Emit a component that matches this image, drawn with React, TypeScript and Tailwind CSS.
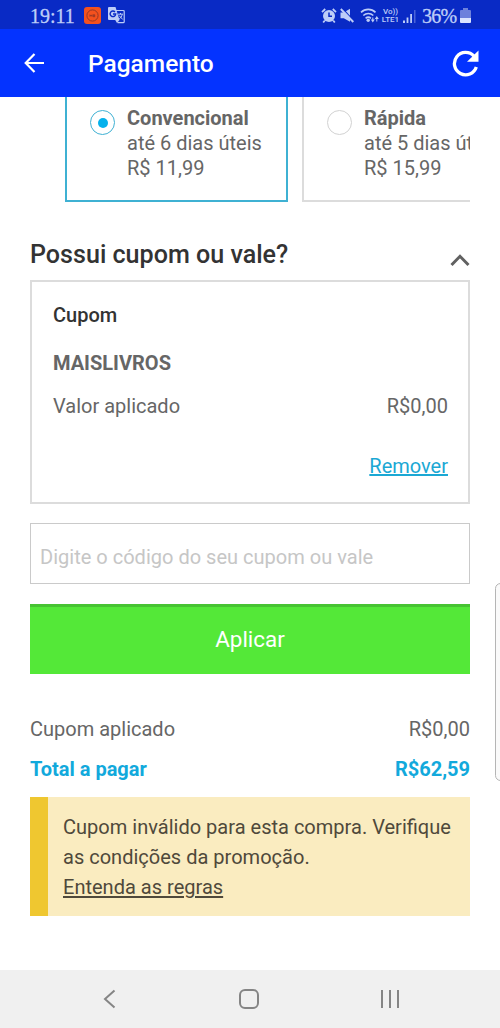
import React from 'react';

interface ShippingOptionProps {
  name: string;
  deadline: string;
  price: string;
  selected?: boolean;
}

const ShippingOption: React.FC<ShippingOptionProps> = ({ name, deadline, price, selected }) => (
  <div
    className={`flex h-[105px] w-[223px] shrink-0 gap-[12px] border-2 border-t-0 pt-[9px] pl-[23px] ${
      selected ? 'border-[#3fb1d3]' : 'border-[#dcdcdc]'
    }`}
  >
    <div
      className={`mt-[4px] flex h-[25px] w-[25px] shrink-0 items-center justify-center rounded-full border-[1.5px] ${
        selected ? 'border-[#3fb1d3]' : 'border-[#d2d2d2]'
      }`}
    >
      {selected && <span className="h-[10px] w-[10px] rounded-full bg-[#05b1ec]" />}
    </div>
    <div className="text-[20px] leading-[25px] whitespace-nowrap text-[#666]">
      <p className="font-bold">{name}</p>
      <p>{deadline}</p>
      <p>{price}</p>
    </div>
  </div>
);

const StatusBar = () => (
  <div className="flex h-[29px] shrink-0 items-center justify-between bg-[#092ac5] pt-[2px] pr-[29px] pl-[30px] text-[#bdcdf8]">
    <div className="flex items-center">
      <span className="w-[46px] font-['Liberation_Serif'] text-[20px] leading-none [-webkit-text-stroke:0.3px_currentColor]">19:11</span>
      <svg className="ml-2" width="17" height="17" viewBox="0 0 17 17" fill="none">
        <rect width="17" height="17" rx="3" fill="#f4511e" />
        <circle cx="8.5" cy="8.5" r="5.6" stroke="#8c3426" strokeWidth="0.9" />
        <path d="M6 9.7V7.8l1 1 1-1v1.9M9.3 7.8v1.9h1.4V7.8z" stroke="#8c3426" strokeWidth="0.9" />
      </svg>
      <svg className="ml-[7px]" width="17" height="17" viewBox="0 0 17 17" fill="none">
        <path d="M7.5 3.5h7.7a1 1 0 0 1 1 1v10.2a1 1 0 0 1-1 1H9.5" stroke="#bdcdf8" strokeWidth="1.2" />
        <path d="M1 0h6.5l4 13H1a1 1 0 0 1-1-1V1a1 1 0 0 1 1-1z" fill="#bdcdf8" />
        <path d="M7.2 13h4.3L9 16z" fill="#bdcdf8" />
        <path d="M7 5A2.8 2.8 0 1 0 7.7 7H5" stroke="#092ac5" strokeWidth="1.4" />
        <path d="M10 7.2h5M12.5 6v1.2M14.2 7.5c-.4 2-1.6 3.5-3 4.5M11 8.5l3.8 4" stroke="#bdcdf8" />
      </svg>
    </div>
    <div className="flex items-center">
      {/* Alarm */}
      <svg width="16" height="16" viewBox="0 0 16 16" fill="none">
        <circle cx="8" cy="8" r="6" fill="#bdcdf8" />
        <path d="M1 4.2 4.2 1M15 4.2 11.8 1M3.8 12.5l-1.6 2M12.2 12.5l1.6 2" stroke="#bdcdf8" strokeWidth="1.8" />
        <path d="M8 4.5V8.3h3" stroke="#092ac5" strokeWidth="1.5" />
      </svg>
      {/* Muted */}
      <svg className="ml-[3px]" width="14" height="15" viewBox="0 0 14 15" fill="none">
        <path d="M.5 4.5h3.3L10 .8v13L3.8 10.2H.5z" fill="#bdcdf8" />
        <path d="m2 0 12 12.8" stroke="#092ac5" strokeWidth="1.2" />
        <path d="m.8 1 12.5 13" stroke="#bdcdf8" strokeWidth="1.9" />
      </svg>
      {/* Wifi */}
      <svg className="ml-[6px]" width="20" height="15" viewBox="0 0 20 15" fill="none">
        <path d="M1 4.3a10.5 10.5 0 0 1 14.5 0M3.3 7.5a7.3 7.3 0 0 1 10 0M5.6 10.3a4 4 0 0 1 5.3 0" stroke="#bdcdf8" strokeWidth="1.6" />
        <circle cx="8.2" cy="12.3" r="1.7" fill="#bdcdf8" />
        <path d="M10.8 11.5h4l-2 3zM14.8 11h4l-2-3zM12.3 9.5h1v2h-1zM16.3 11h1v2.5h-1z" fill="#bdcdf8" />
      </svg>
      <div className="ml-[1px] w-[19px] text-center text-[8px] leading-[8px] font-medium">
        <p>Vo))</p>
        <p>LTE1</p>
      </div>
      {/* Signal */}
      <svg className="ml-[3px]" width="13" height="14" viewBox="0 0 13 14">
        <path d="M0 11.5h2V14H0zM3.6 8.5h1.8V14H3.6zM7.2 5H9v9H7.2z" fill="#bdcdf8" />
        <path d="M11 1h1.5v13H11z" fill="#4a63d8" />
      </svg>
      <span className="ml-[6px] w-[34px] font-['Liberation_Serif'] text-[20px] leading-none tracking-[-0.7px] [-webkit-text-stroke:0.3px_currentColor]">
        36%
      </span>
      {/* Battery */}
      <svg className="ml-[4px]" width="11" height="15" viewBox="0 0 11 15">
        <path d="M3 0h5v2h2a1 1 0 0 1 1 1v7H0V3a1 1 0 0 1 1-1h2z" fill="#6d81dc" />
        <path d="M0 10h11v4a1 1 0 0 1-1 1H1a1 1 0 0 1-1-1z" fill="#dce5ff" />
      </svg>
    </div>
  </div>
);

const Header = () => (
  <header className="flex h-[68px] shrink-0 items-center bg-[#0433ff] pr-[21px] pl-[24px] text-white">
    <svg width="21" height="20" viewBox="0 0 21 20" fill="none" stroke="currentColor" strokeWidth="2.2">
      <path d="M20 10H2M10.5 1 1.7 10l8.8 9" />
    </svg>
    <h1 className="mt-[3px] ml-[43px] text-[24.5px] font-medium">Pagamento</h1>
    <svg className="ml-auto" width="27" height="27" viewBox="0 0 27 27" fill="none">
      <path d="M22 6.2A11.2 11.2 0 1 0 24.3 17" stroke="currentColor" strokeWidth="3.3" />
      <path d="M26.5.5v11.3H15z" fill="currentColor" />
    </svg>
  </header>
);

const CouponBox = () => (
  <section className="h-[224px] border-2 border-[#dcdcdc] pt-[20px] pr-[20px] pl-[21px] text-[20px] leading-[26px] text-[#666]">
    <h3 className="font-medium text-[#333]">Cupom</h3>
    <p className="mt-[22px] font-bold">MAISLIVROS</p>
    <div className="mt-[17px] flex justify-between">
      <span>Valor aplicado</span>
      <span>R$0,00</span>
    </div>
    <div className="mt-[34px] text-right">
      <a href="#" className="text-[#1ba8d4] underline">Remover</a>
    </div>
  </section>
);

const NavBar = () => (
  <nav className="flex h-[58px] shrink-0 items-center justify-between bg-[#f0f0f0] pr-[101px] pl-[103px] text-[#858585]">
    <svg width="13" height="20" viewBox="0 0 13 20" fill="none" stroke="currentColor" strokeWidth="2">
      <path d="M11.5 1.5 2 10l9.5 8.5" />
    </svg>
    <span className="h-5 w-5 rounded-[6px] border-2 border-current" />
    <div className="flex h-[18px] w-[18px] justify-between">
      <span className="w-[2px] bg-current" />
      <span className="w-[2px] bg-current" />
      <span className="w-[2px] bg-current" />
    </div>
  </nav>
);

export default function App() {
  return (
    <div className="relative flex h-[1028px] w-[500px] flex-col overflow-hidden bg-white font-['Roboto',sans-serif]">
      <StatusBar />
      <Header />

      <main className="flex-1 px-[30px]">
        {/* Horizontal list, the second option runs past the right edge */}
        <div className="ml-[35px] flex gap-[14px] overflow-hidden">
          <ShippingOption name="Convencional" deadline="até 6 dias úteis" price="R$ 11,99" selected />
          <ShippingOption name="Rápida" deadline="até 5 dias úteis" price="R$ 15,99" />
        </div>

        <div className="mt-[36px] flex h-[42px] justify-between">
          <h2 className="pt-[1px] text-[25.1px] leading-[32px] font-medium text-[#333]">Possui cupom ou vale?</h2>
          <svg className="mt-[15px]" width="20" height="14" viewBox="0 0 20 14" fill="none">
            <path d="M1.5 12 10 3.3l8.5 8.7" stroke="#616161" strokeWidth="3" />
          </svg>
        </div>

        <CouponBox />

        <input
          type="text"
          placeholder="Digite o código do seu cupom ou vale"
          className="mt-[19px] block h-[61px] w-full border-[1.5px] border-[#cacaca] px-[9px] pt-[6px] text-[20.05px] text-[#333] outline-none placeholder:text-[#c6c6c6]"
        />
        <button
          type="button"
          className="mt-[20px] block h-[70px] w-full border-t-[3px] border-[#47c332] bg-[#54e838] pb-[2px] text-[22.4px] text-white"
        >
          Aplicar
        </button>

        <div className="mt-[42px] text-[20px] leading-[26px] text-[#666]">
          <div className="flex justify-between">
            <span>Cupom aplicado</span>
            <span>R$0,00</span>
          </div>
          <div className="mt-[14px] flex justify-between font-bold text-[#12a9dc]">
            <span>Total a pagar</span>
            <span>R$62,59</span>
          </div>
        </div>

        <div className="mt-[15px] h-[119px] border-l-[18px] border-[#efc730] bg-[#faecc0] pt-[15px] pl-[15px] text-[20.05px] leading-[30px] text-[#4f493b]">
          <p>
            Cupom inválido para esta compra. Verifique
            <br />
            as condições da promoção.
          </p>
          <a href="#" className="underline">Entenda as regras</a>
        </div>
      </main>

      <NavBar />

      {/* Edge panel handle */}
      <div className="absolute top-[583px] -right-[6px] h-[198px] w-[11px] rounded-[6px] border border-[#b5b5b5] bg-[#fafafa]" />
    </div>
  );
}
